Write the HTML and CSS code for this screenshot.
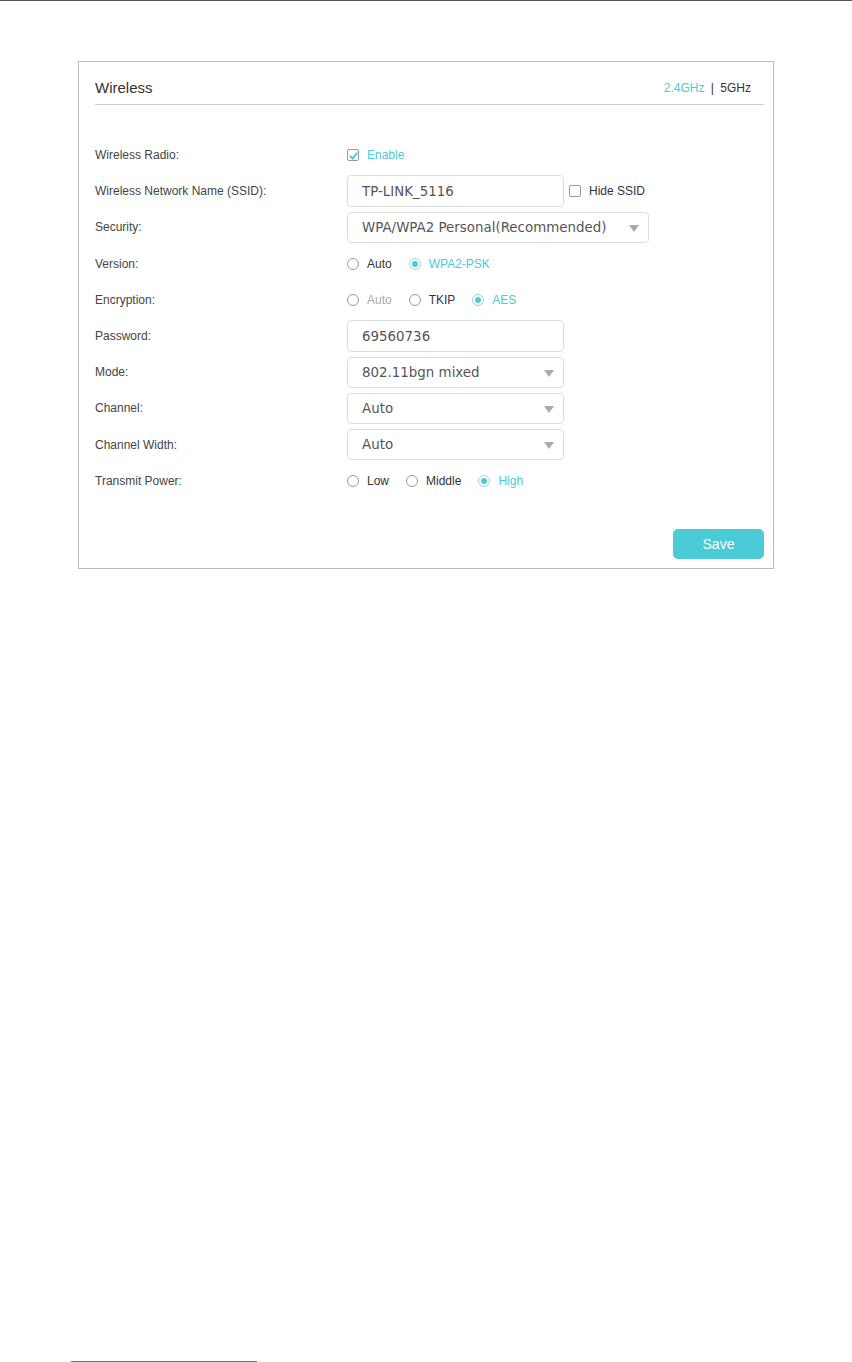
FILE: index.html
```html
<!DOCTYPE html>
<html lang="en">
<head>
    <meta charset="UTF-8">
    <meta name="viewport" content="width=device-width, initial-scale=1.0">
    <title>Wireless Settings</title>
    <link rel="stylesheet" href="styles.css">
</head>
<body>
    <div class="page">
        <div class="top-rule"></div>

        <div class="panel">
            <div class="panel-head">
                <h2>Wireless</h2>
                <div class="bands">
                    <span class="band active">2.4GHz</span>
                    <span class="band-sep">|</span>
                    <span class="band">5GHz</span>
                </div>
            </div>

            <div class="form">
                <div class="row">
                    <label class="row-label">Wireless Radio:</label>
                    <div class="row-field">
                        <span class="check checked"></span>
                        <span class="opt on">Enable</span>
                    </div>
                </div>
                <div class="row">
                    <label class="row-label">Wireless Network Name (SSID):</label>
                    <div class="row-field">
                        <input class="text-box" type="text" value="TP-LINK_5116">
                        <span class="check hide-ssid"></span>
                        <span class="opt">Hide SSID</span>
                    </div>
                </div>
                <div class="row">
                    <label class="row-label">Security:</label>
                    <div class="row-field">
                        <div class="combo wide">WPA/WPA2 Personal(Recommended)</div>
                    </div>
                </div>
                <div class="row">
                    <label class="row-label">Version:</label>
                    <div class="row-field">
                        <span class="radio"></span><span class="opt">Auto</span>
                        <span class="radio selected"></span><span class="opt on">WPA2-PSK</span>
                    </div>
                </div>
                <div class="row">
                    <label class="row-label">Encryption:</label>
                    <div class="row-field">
                        <span class="radio"></span><span class="opt off">Auto</span>
                        <span class="radio"></span><span class="opt">TKIP</span>
                        <span class="radio selected"></span><span class="opt on">AES</span>
                    </div>
                </div>
                <div class="row">
                    <label class="row-label">Password:</label>
                    <div class="row-field">
                        <input class="text-box" type="text" value="69560736">
                    </div>
                </div>
                <div class="row">
                    <label class="row-label">Mode:</label>
                    <div class="row-field">
                        <div class="combo">802.11bgn mixed</div>
                    </div>
                </div>
                <div class="row">
                    <label class="row-label">Channel:</label>
                    <div class="row-field">
                        <div class="combo">Auto</div>
                    </div>
                </div>
                <div class="row">
                    <label class="row-label">Channel Width:</label>
                    <div class="row-field">
                        <div class="combo">Auto</div>
                    </div>
                </div>
                <div class="row">
                    <label class="row-label">Transmit Power:</label>
                    <div class="row-field">
                        <span class="radio"></span><span class="opt">Low</span>
                        <span class="radio"></span><span class="opt">Middle</span>
                        <span class="radio selected"></span><span class="opt on">High</span>
                    </div>
                </div>
            </div>

            <div class="actions">
                <button class="save-btn">Save</button>
            </div>
        </div>

        <div class="foot-rule"></div>
    </div>
</body>
</html>
```

FILE: styles.css
```css
body, html {
    margin: 0;
    height: 100%;
    font-family: "Liberation Sans", Arial, sans-serif;
    background: #fff;
}

.page {
    display: flex;
    flex-direction: column;
    height: 1362px;
}

.top-rule {
    height: 1px;
    background: #555;
}

.panel {
    margin: 60px 0 0 78px;
    width: 696px;
    box-sizing: border-box;
    border: 1px solid #bbb;
    padding: 0 9px 9px 16px;
}

.panel-head {
    display: flex;
    justify-content: space-between;
    align-items: center;
    padding: 16px 0 6px;
    border-bottom: 1px solid #ccc;
}

.panel-head h2 {
    margin: 0;
    font-size: 15px;
    line-height: 20px;
    font-weight: normal;
    color: #333;
}

.bands {
    font-size: 12px;
    color: #333;
    padding-right: 13px;
}

.band.active {
    color: #4acbd6;
}

.band-sep {
    margin: 0 3px;
}

.form {
    margin-top: 32px;
}

.row {
    display: flex;
    align-items: center;
    height: 36.2px;
}

.row-label {
    width: 252px;
    font-size: 12px;
    color: #444;
}

.row-field {
    display: flex;
    align-items: center;
    font-size: 12px;
    color: #333;
}

.text-box,
.combo {
    width: 217px;
    height: 32px;
    box-sizing: border-box;
    border: 1px solid #ddd;
    border-radius: 4px;
    padding: 0 14px;
    font-family: "DejaVu Sans", Verdana, sans-serif;
    font-size: 13.4px;
    color: #555;
    background: #fff;
    outline: none;
}

.combo {
    position: relative;
    display: flex;
    align-items: center;
    height: 31px;
}

.combo.wide {
    width: 302px;
}

.combo::after {
    content: "";
    position: absolute;
    right: 9px;
    top: 12px;
    border-left: 5px solid transparent;
    border-right: 5px solid transparent;
    border-top: 7px solid #aaa;
}

.check {
    width: 10px;
    height: 10px;
    border: 1px solid #999;
    border-radius: 2px;
    margin-right: 8px;
    position: relative;
}

.check.checked::after {
    content: "";
    position: absolute;
    left: 3px;
    top: 1px;
    width: 3px;
    height: 6px;
    border: solid #4acbd6;
    border-width: 0 2px 2px 0;
    transform: rotate(40deg);
}

.hide-ssid {
    margin-left: 5px;
}

.radio {
    width: 10px;
    height: 10px;
    border: 1px solid #999;
    border-radius: 50%;
    margin-right: 8px;
    position: relative;
}

.radio.selected {
    border-color: #8fd9e0;
}

.radio.selected::after {
    content: "";
    position: absolute;
    left: 2px;
    top: 2px;
    width: 6px;
    height: 6px;
    border-radius: 50%;
    background: #4acbd6;
}

.opt {
    margin-right: 17px;
}

.opt.on {
    color: #4acbd6;
}

.opt.off {
    color: #aaa;
}

.actions {
    display: flex;
    justify-content: flex-end;
    margin-top: 30px;
}

.save-btn {
    width: 91px;
    height: 30px;
    border: none;
    border-radius: 5px;
    background: #4acbd6;
    color: #fff;
    font-family: "Liberation Sans", Arial, sans-serif;
    font-size: 14px;
}

.foot-rule {
    margin: auto 0 0 71px;
    width: 186px;
    height: 1px;
    background: #3a8494;
}
```
